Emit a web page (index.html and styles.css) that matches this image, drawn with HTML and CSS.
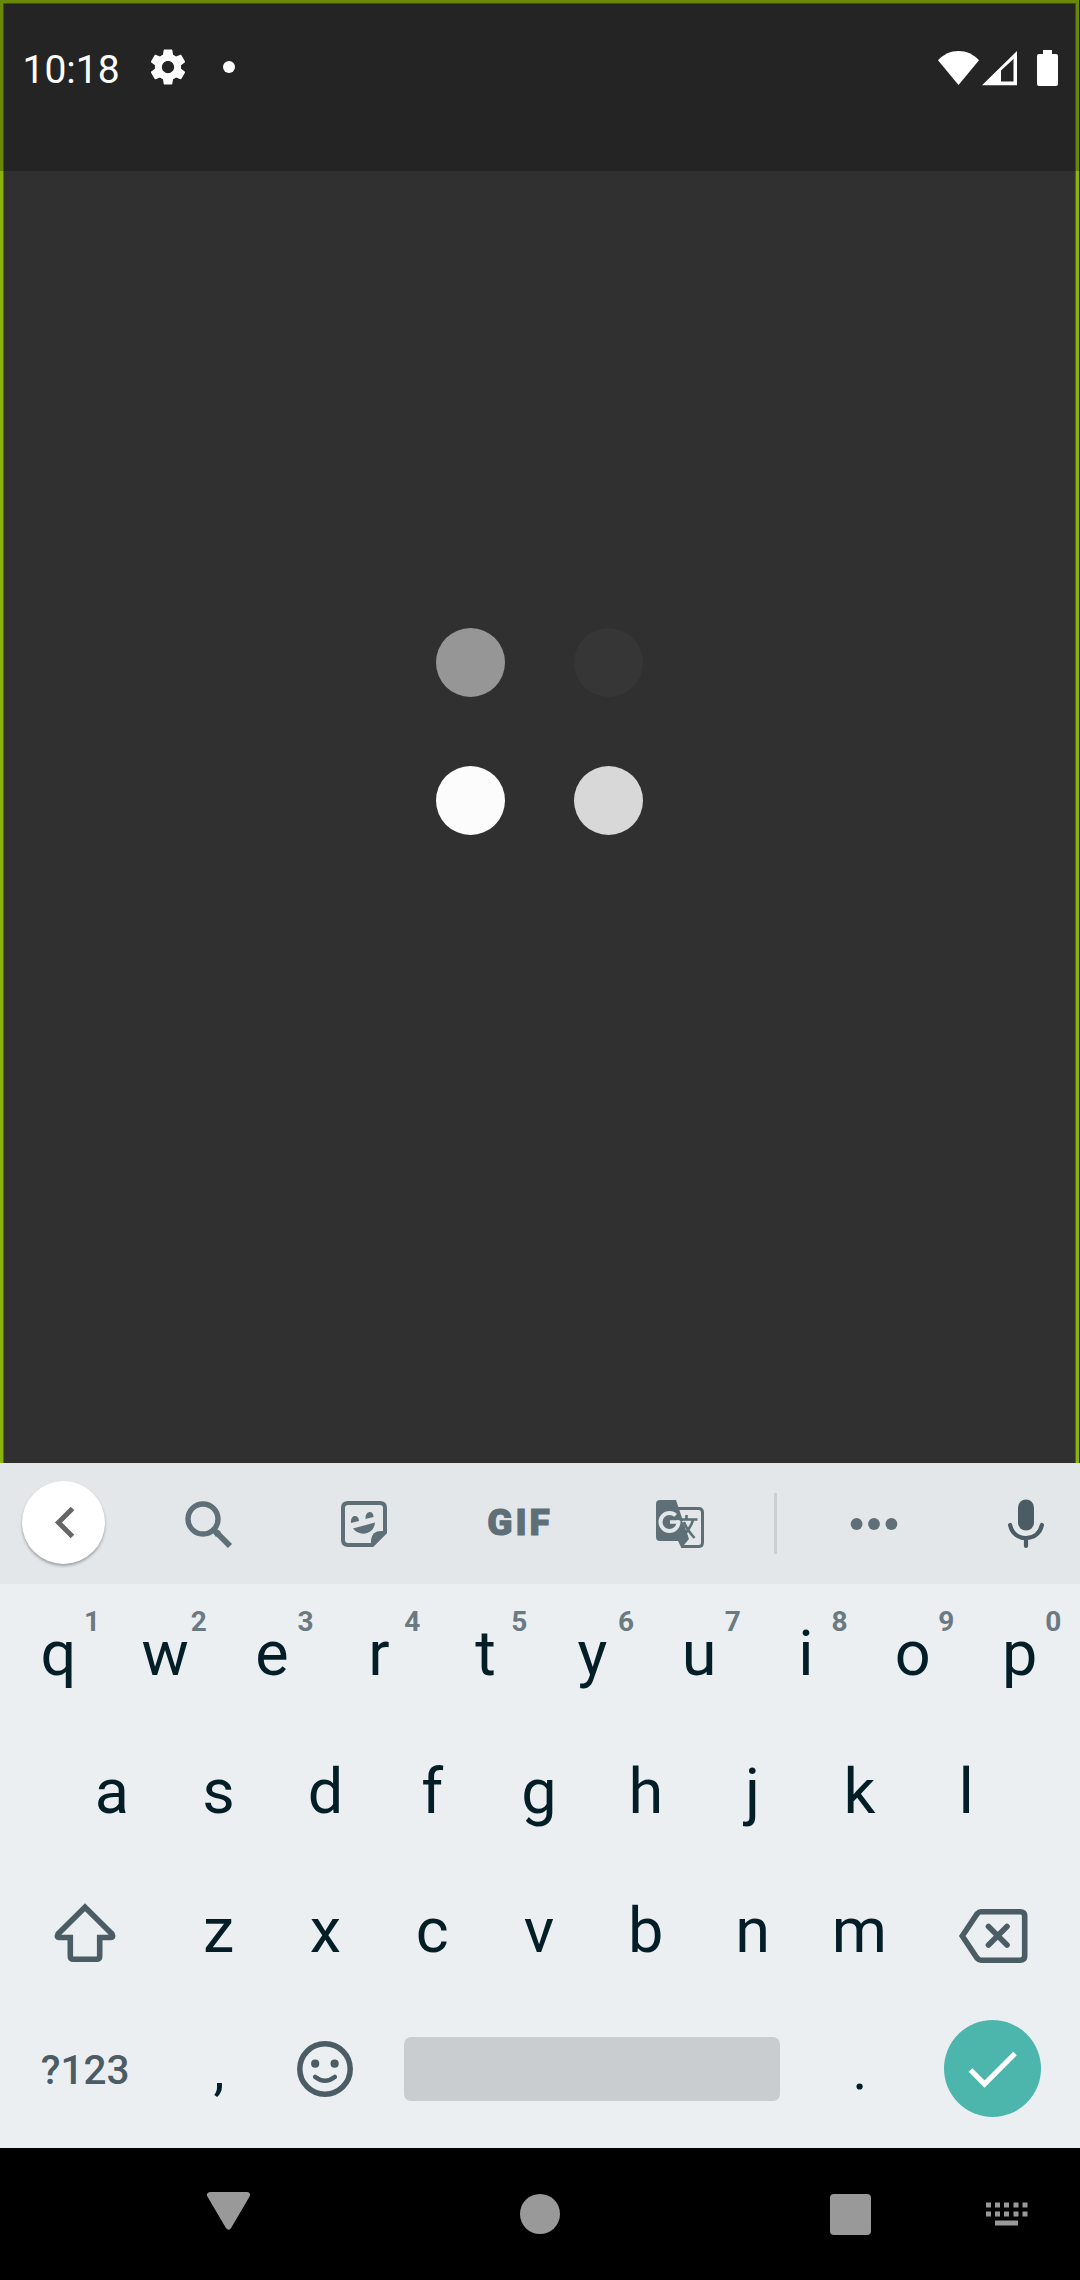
FILE: index.html
```html
<!DOCTYPE html>
<html lang="en">
<head>
<meta charset="utf-8">
<title>Loading</title>
<link rel="stylesheet" href="styles.css">
</head>
<body>
<div class="screen">
  <main class="app">
    <div class="loader">
      <span class="dot dot-mid"></span><span class="dot dot-faint"></span>
      <span class="dot dot-full"></span><span class="dot dot-light"></span>
    </div>
    <header class="status">
      <span class="clock">10:18</span>
      <svg class="gear" width="42" height="42" viewBox="0 0 24 24"><path fill="#fff" d="M19.43 12.98c.04-.32.07-.64.07-.98s-.03-.66-.07-.98l2.11-1.65c.19-.15.24-.42.12-.64l-2-3.46c-.12-.22-.39-.3-.61-.22l-2.49 1c-.52-.4-1.08-.73-1.69-.98l-.38-2.65C14.46 2.18 14.25 2 14 2h-4c-.25 0-.46.18-.49.42l-.38 2.65c-.61.25-1.17.59-1.69.98l-2.49-1c-.23-.09-.49 0-.61.22l-2 3.46c-.13.22-.07.49.12.64l2.11 1.65c-.04.32-.07.65-.07.98s.03.66.07.98l-2.11 1.65c-.19.15-.24.42-.12.64l2 3.46c.12.22.39.3.61.22l2.49-1c.52.4 1.08.73 1.69.98l.38 2.65c.03.24.24.42.49.42h4c.25 0 .46-.18.49-.42l.38-2.65c.61-.25 1.17-.59 1.69-.98l2.49 1c.23.09.49 0 .61-.22l2-3.46c.12-.22.07-.49-.12-.64l-2.11-1.65zM12 15.5c-1.93 0-3.5-1.57-3.5-3.5s1.57-3.5 3.5-3.5 3.5 1.57 3.5 3.5-1.57 3.5-3.5 3.5z"/></svg>
      <span class="notice"></span>
      <div class="system">
        <svg width="41" height="36" viewBox="0 0 41 36"><path fill="#fff" d="M20.5 35 0 10.2C5.800 4.200 12.500 1 20.500 1S35.200 4.200 41 10.200Z"/></svg>
        <svg width="35" height="36" viewBox="0 0 35 36"><path fill="#fff" fill-rule="evenodd" d="M0 35.300 35 1V35.300ZM19 20.500V31.500H31.500V9Z"/></svg>
        <svg class="battery" width="21" height="36" viewBox="0 0 21 36"><path fill="#fff" d="M6 0h9v4h4q2 0 2 2v28q0 2-2 2H2q-2 0-2-2V6q0-2 2-2h4Z"/></svg>
      </div>
    </header>
  </main>

  <section class="keyboard">
    <div class="tools">
      <div class="tool"><span class="back"><svg width="20" height="34" viewBox="0 0 20 34"><path d="M17.500 2.500 3.500 16.500 17.500 30.500" fill="none" stroke="#666" stroke-width="5"/></svg></span></div>
      <div class="tool"><svg class="search" width="48" height="48" viewBox="0 0 48 48"><g fill="none" stroke="#5f6f77"><circle cx="18" cy="18" r="15" stroke-width="5.400"/><path d="M31 31 45 45" stroke-width="5.800"/></g><path fill="#5f6f77" d="m28 32 4-4 4 3-5 5Z"/></svg></div>
      <div class="tool"><svg width="46" height="46" viewBox="0 0 46 46"><path fill="none" stroke="#5f6f77" stroke-width="4" stroke-linejoin="round" d="M7 2H39Q44 2 44 7V31L31 44H7Q2 44 2 39V7Q2 2 7 2Z"/><g fill="#5f6f77"><path d="M30 46V39Q31 30 40 30H46V32L32 46Z"/><path d="M10 22C9 13 18 13 18 20ZM24.500 18C24 9 33 9 32.500 16ZM12 27.500 34 21.500C33 34 18 36 12 27.500Z"/></g></svg></div>
      <div class="tool"><span class="gif">GIF</span></div>
      <div class="tool"><svg width="48" height="48" viewBox="0 0 48 48"><path fill="none" stroke="#5f6f77" stroke-width="3" d="M20 8.500H42.500Q46.500 8.500 46.500 12.500V42.500Q46.500 46.500 42.500 46.500H25"/><path fill="#5f6f77" d="M4 0H20L33 39 25.500 48 22 41H4Q0 41 0 37V4Q0 0 4 0Z"/><circle cx="13.500" cy="22" r="9" fill="none" stroke="#e3e7ea" stroke-width="4"/><path fill="#5f6f77" d="m15 20 8-8 2 8.500Z"/><path fill="none" stroke="#e3e7ea" stroke-width="3.500" d="M14 22H22.700"/><path fill="#e3e7ea" d="M26 21H36Q34 27 31 31Z"/><g fill="none" stroke="#5f6f77" stroke-width="2.600"><path d="M30.500 15V19M24 19.500H41.500M37 20C35 27 31 32 27 36M28 22C30 28 34 33 38.500 38"/></g></svg></div>
      <div class="tool"><span class="divider"></span></div>
      <div class="tool"><svg width="48" height="12" viewBox="0 0 48 12" fill="#5f6f77"><circle cx="6.600" cy="6" r="5.900"/><circle cx="24" cy="6" r="5.900"/><circle cx="41.400" cy="6" r="5.900"/></svg></div>
      <div class="tool mic"><svg width="36" height="50" viewBox="0 0 36 50"><rect x="10" y=".5" width="16" height="31" rx="8" fill="#4b5c64"/><path fill="none" stroke="#4b5c64" stroke-width="4.200" stroke-linecap="round" d="M2.100 26C4 34.500 10 39 18 39S32 34.500 33.900 26M18 39V47"/></svg></div>
    </div>

    <div class="keys">
      <div class="row">
        <span class="key">q<sup>1</sup></span><span class="key">w<sup>2</sup></span><span class="key">e<sup>3</sup></span><span class="key">r<sup>4</sup></span><span class="key">t<sup>5</sup></span><span class="key">y<sup>6</sup></span><span class="key">u<sup>7</sup></span><span class="key">i<sup>8</sup></span><span class="key">o<sup>9</sup></span><span class="key">p<sup>0</sup></span>
      </div>
      <div class="row">
        <span class="key">a</span><span class="key">s</span><span class="key">d</span><span class="key">f</span><span class="key">g</span><span class="key">h</span><span class="key">j</span><span class="key">k</span><span class="key">l</span>
      </div>
      <div class="row">
        <span class="key wide"><svg class="shift" width="62" height="60" viewBox="0 0 62 60"><path fill="none" stroke="#4b5c64" stroke-width="5.600" d="M31 4.300 58 31Q60 35 56 34.500H45.700V53Q45.700 56.200 42.500 56.200H19.500Q16.300 56.200 16.300 53V34.500H6Q2 35 4 31Z"/></svg></span>
        <span class="key">z</span><span class="key">x</span><span class="key">c</span><span class="key">v</span><span class="key">b</span><span class="key">n</span><span class="key">m</span>
        <span class="key wide"><svg class="erase" width="70" height="56" viewBox="0 0 70 56"><g fill="none" stroke="#4b5c64" stroke-width="5.600"><path d="M4.300 28 19 6Q21 3.800 23 3.800H62Q66.700 3.800 66.700 8V48Q66.700 52.200 62 52.200H23Q21 52.200 19 50Z"/><path stroke-linecap="round" d="M30.500 18.500 49 37M49 18.500 30.500 37"/></g></svg></span>
      </div>
      <div class="row">
        <span class="key wide symbols">?123</span>
        <span class="key mark">,</span>
        <span class="key"><svg width="56" height="56" viewBox="0 0 56 56"><circle cx="28" cy="28" r="25.200" fill="none" stroke="#4b5c64" stroke-width="5.500"/><g fill="#4b5c64"><circle cx="18.200" cy="22.700" r="4.100"/><circle cx="37.600" cy="22.700" r="4.100"/></g><path fill="none" stroke="#4b5c64" stroke-width="4.600" stroke-linecap="round" d="M18.200 36Q28 43.500 37.800 36"/></svg></span>
        <span class="key space"><span class="bar"></span></span>
        <span class="key mark">.</span>
        <span class="key wide"><span class="enter"><svg width="50" height="38" viewBox="0 0 50 38"><path fill="none" stroke="#fff" stroke-width="5.200" d="M2.500 20 16.500 34 47 3.500"/></svg></span></span>
      </div>
    </div>
  </section>

  <nav class="nav">
    <svg width="46" height="40" viewBox="0 0 46 40"><path fill="#999" stroke="#999" stroke-width="6" stroke-linejoin="round" d="M4 4H41L22.500 35.500Z"/></svg>
    <span class="home"></span>
    <span class="recent"></span>
    <svg class="switch" width="42" height="24" viewBox="0 0 42 24" fill="#999"><path d="M0 .5h5v5H0zM9 .5h5v5H9zM18 .5h5v5h-5zM27.500 .5h5v5h-5zM36.500 .5h5v5h-5zM0 9.500h5v5H0zM9 9.500h5v5H9zM18 9.500h5v5h-5zM27.500 9.500h5v5h-5zM36.500 9.500h5v5h-5zM9 18.500h23v5H9z"/></svg>
  </nav>
</div>
</body>
</html>
```
FILE: styles.css
```css
* { box-sizing: border-box; }
body { margin: 0; background: #000; font-family: Roboto, "Noto Sans", sans-serif; }
svg { display: block; flex: none; overflow: visible; }

.screen { width: 1080px; height: 2280px; display: flex; flex-direction: column; }

.app {
  position: relative;
  height: 1463px;
  padding-right: 1px;
  display: flex;
  align-items: center;
  justify-content: center;
  background: #303030;
  box-shadow: inset -1px 0 #303030, inset 3px 3px #8ab30b, inset -4px 0 #8ab30b, inset 4px 4px #56691d, inset -5px 0 #56691d;
}
.loader { display: grid; grid-template-columns: 69px 69px; gap: 68.500px; }
.dot { width: 69px; height: 69px; border-radius: 50%; }
.dot-mid { background: #969696; }
.dot-faint { background: #363636; }
.dot-full { background: #fcfcfc; }
.dot-light { background: #d8d8d8; }

/* Translucent bar laid over the top of the app */
.status {
  position: absolute;
  inset: 0 0 auto;
  height: 171px;
  padding: 0 22px 36px 22.500px;
  display: flex;
  align-items: center;
  background: rgba(0, 0, 0, .24);
  color: #fff;
}
.clock { width: 124.500px; font-size: 39px; line-height: 46px; padding-top: 4px; }
.gear { margin-bottom: 1px; }
.notice { width: 12px; height: 12px; margin: 0 0 1px 34px; border-radius: 50%; background: #fff; }
.system { display: flex; margin-left: auto; gap: 3px; }
.battery { margin-left: 17px; }

.keyboard { height: 685px; background: #ebeff2; }
.tools {
  height: 121px;
  display: grid;
  grid-template-columns: 127px 163px 148px 164px 156px 35px 161px 126px;
  background: #e3e7ea;
}
.tool { display: flex; align-items: center; justify-content: center; }
.back {
  width: 83px;
  height: 83px;
  margin-bottom: 2px;
  padding-left: 2px;
  border-radius: 50%;
  display: flex;
  align-items: center;
  justify-content: center;
  background: #fff;
  box-shadow: 0 2px 3px rgba(0, 0, 0, .3);
}
.search { margin-top: 2px; }
.gif {
  margin-bottom: 2px;
  font-size: 37px;
  line-height: 44px;
  font-weight: 900;
  letter-spacing: 3px;
  color: #5f6f77;
  -webkit-text-stroke: 1px #5f6f77;
}
.divider { width: 3px; height: 61px; background: #cacfd2; }
.mic { padding-left: 18px; }

.keys { padding: 0 6.500px 0 4.500px; }
.row { height: 138.500px; display: flex; justify-content: center; }
.key {
  position: relative;
  width: 106.800px;
  display: flex;
  align-items: center;
  justify-content: center;
  font-size: 63px;
  line-height: 74px;
  color: #041e28;
}
.row:nth-child(odd) .key { padding-top: 1px; }
.key sup {
  position: absolute;
  top: 21px;
  left: 77px;
  width: 20px;
  font-size: 28px;
  line-height: 34px;
  font-weight: 700;
  text-align: center;
  color: #6b7a81;
}
.key.wide { width: 160.200px; }
.key.space { width: 427.200px; }
.bar { width: 376px; height: 64px; border-radius: 7px; background: #c9cdd0; }
.key.symbols { padding-top: 2px; font-size: 40.500px; font-weight: 500; color: #4b5c64; }
.key.mark { padding: 3px 0 0 1px; font-size: 56px; }
.shift { margin-top: 4px; }
.erase { margin-top: 10px; }
.enter {
  width: 97px;
  height: 97px;
  border-radius: 50%;
  display: flex;
  align-items: center;
  justify-content: center;
  background: #4db6ac;
}

.nav { height: 132px; display: flex; align-items: center; padding-left: 205.500px; }
.nav > :first-child { margin-bottom: 7px; }
.home { width: 40px; height: 40px; margin-left: 268.500px; border-radius: 50%; background: #999; }
.recent { width: 41px; height: 41px; margin-left: 270px; border-radius: 4px; background: #999; }
.switch { margin-left: 115px; }
```
